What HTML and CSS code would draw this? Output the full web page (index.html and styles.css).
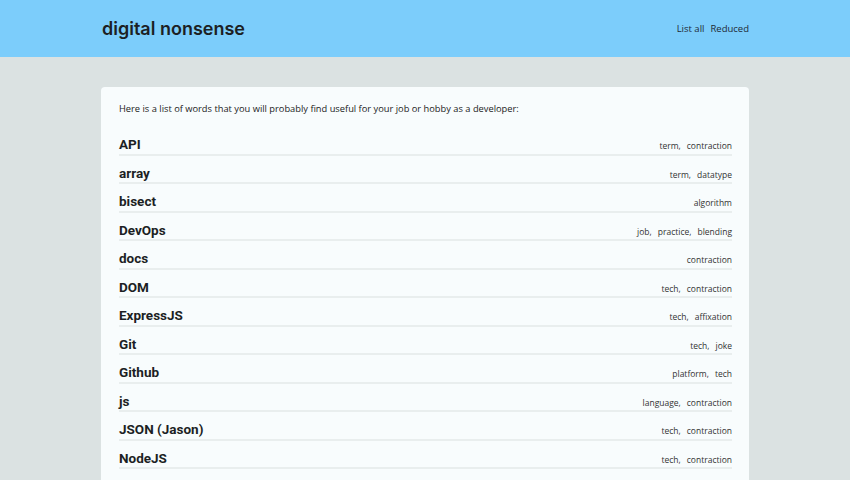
FILE: index.html
```html
<!DOCTYPE html>
<html lang="en">
<head>
<meta charset="utf-8">
<title>digital nonsense</title>
<link rel="stylesheet" href="styles.css">
</head>
<body>
<header class="topbar">
  <div class="container topbar-inner">
    <h1 class="brand">digital nonsense</h1>
    <nav class="nav">
      <a href="#">List all</a>
      <a href="#">Reduced</a>
    </nav>
  </div>
</header>
<main class="container">
  <section class="card">
    <p class="intro">Here is a list of words that you will probably find useful for your job or hobby as a developer:</p>
    <ul class="words">
      <li class="word"><span class="term">API</span><span class="tags"><span>term,</span><span>contraction</span></span></li>
      <li class="word"><span class="term">array</span><span class="tags"><span>term,</span><span>datatype</span></span></li>
      <li class="word"><span class="term">bisect</span><span class="tags"><span>algorithm</span></span></li>
      <li class="word"><span class="term">DevOps</span><span class="tags"><span>job,</span><span>practice,</span><span>blending</span></span></li>
      <li class="word"><span class="term">docs</span><span class="tags"><span>contraction</span></span></li>
      <li class="word"><span class="term">DOM</span><span class="tags"><span>tech,</span><span>contraction</span></span></li>
      <li class="word"><span class="term">ExpressJS</span><span class="tags"><span>tech,</span><span>affixation</span></span></li>
      <li class="word"><span class="term">Git</span><span class="tags"><span>tech,</span><span>joke</span></span></li>
      <li class="word"><span class="term">Github</span><span class="tags"><span>platform,</span><span>tech</span></span></li>
      <li class="word"><span class="term">js</span><span class="tags"><span>language,</span><span>contraction</span></span></li>
      <li class="word"><span class="term">JSON (Jason)</span><span class="tags"><span>tech,</span><span>contraction</span></span></li>
      <li class="word"><span class="term">NodeJS</span><span class="tags"><span>tech,</span><span>contraction</span></span></li>
    </ul>
  </section>
</main>
</body>
</html>
```
FILE: styles.css
```css
* { box-sizing: border-box; }
html, body { margin: 0; padding: 0; }
body {
  background: #dbe2e2;
  color: #1f2328;
  font-family: "Open Sans", "Liberation Sans", sans-serif;
  overflow: hidden;
}
.container {
  width: 648px;
  margin: 0 auto;
}
.topbar {
  background: #7ccdfb;
  height: 57px;
}
.topbar-inner {
  height: 100%;
  display: flex;
  align-items: center;
  justify-content: space-between;
}
.brand {
  margin: 0 0 0 1px;
  font-family: "Inter", "Roboto", sans-serif;
  font-weight: 600;
  font-size: 18px;
  color: #1c1f24;
}
.nav {
  display: flex;
  gap: 6px;
  font-size: 9.5px;
}
.nav a {
  color: #1f2a36;
  text-decoration: none;
}
main.container { padding-top: 30px; }
.card {
  background: #f8fcfd;
  border-radius: 4px;
  padding: 14px 17px 20px 18px;
  min-height: 420px;
}
.intro {
  margin: 0;
  font-size: 9.3px;
  line-height: 16px;
  color: #222;
}
.words {
  list-style: none;
  margin: 10px 0 0;
  padding: 0;
}
.word {
  display: flex;
  justify-content: space-between;
  align-items: baseline;
  height: 28.5px;
  padding-top: 9px;
  line-height: 16px;
  border-bottom: 2px solid #e9eeee;
}
.term {
  font-family: "Roboto", "Inter", sans-serif;
  font-weight: 700;
  font-size: 13.5px;
  color: #1c1f24;
}
.tags {
  display: flex;
  gap: 6px;
  font-size: 8.5px;
  color: #333;
}
```
